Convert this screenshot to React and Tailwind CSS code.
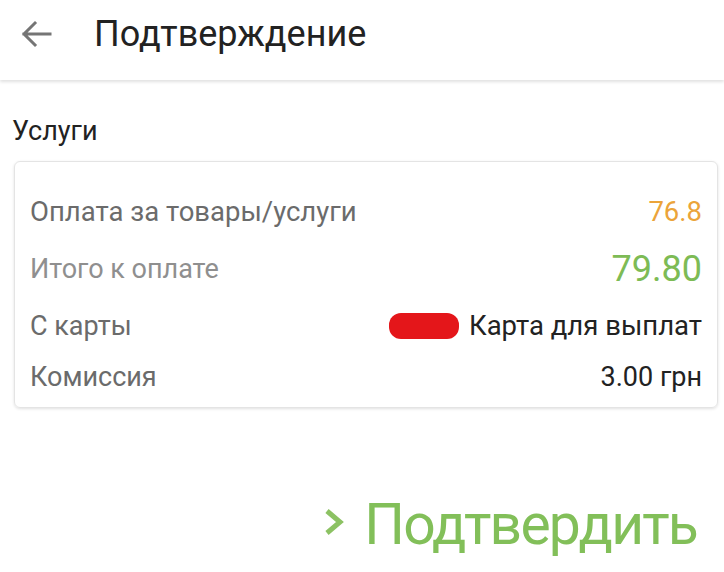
export default function App() {
  return (
    <div className="w-[724px] h-[572px] bg-white overflow-hidden" style={{ fontFamily: 'Roboto, "Noto Sans", sans-serif' }}>
      <div className="h-[80px] flex items-center pb-[13px] bg-white shadow-[0_2px_3px_rgba(0,0,0,0.12)] relative z-10">
        <svg width="32" height="28" viewBox="0 0 32 28" className="ml-[20px]">
          <path d="M30 14H4M15 3L4 14l11 11" fill="none" stroke="#757575" strokeWidth="3" strokeLinecap="square" />
        </svg>
        <span className="ml-[42px] text-[36px] text-[#222] leading-none">Подтверждение</span>
      </div>

      <div className="px-[12px] pt-[38px]">
        <div className="text-[27px] text-[#222] leading-none">Услуги</div>
      </div>

      <div className="mx-[14px] mt-[16px] w-[704px] h-[247px] rounded-[6px] border border-[#e4e4e4] shadow-[0_1px_3px_rgba(0,0,0,0.12)] px-[15px] pt-[24px]">
        <div className="h-[52px] flex items-center justify-between">
          <span className="text-[27.5px] text-[#6b6b6b]">Оплата за товары/услуги</span>
          <span className="text-[27.5px] text-[#eba43a]">76.8</span>
        </div>
        <div className="h-[62px] flex items-center justify-between">
          <span className="text-[27px] text-[#8f8f8f]">Итого к оплате</span>
          <span className="text-[36px] text-[#7dbb55]">79.80</span>
        </div>
        <div className="h-[52px] flex items-center justify-between">
          <span className="text-[27px] text-[#6b6b6b]">С карты</span>
          <span className="flex items-center">
            <span className="w-[70px] h-[26px] rounded-[12px] bg-[#e4161a] mr-[10px]" />
            <span className="text-[27.5px] text-[#222]">Карта для выплат</span>
          </span>
        </div>
        <div className="h-[50px] flex items-center justify-between">
          <span className="text-[27px] text-[#6b6b6b]">Комиссия</span>
          <span className="text-[27px] text-[#222]">3.00 грн</span>
        </div>
      </div>

      <div className="flex justify-end items-center pr-[27px] mt-[88px]">
        <svg width="20" height="28" viewBox="0 0 20 28" className="mr-[20px] mt-[-6px]">
          <path d="M3 3l13 11L3 25" fill="none" stroke="#8cc263" strokeWidth="5" />
        </svg>
        <span className="text-[57px] tracking-[-1.8px] text-[#82bf59] leading-none">Подтвердить</span>
      </div>
    </div>
  )
}
